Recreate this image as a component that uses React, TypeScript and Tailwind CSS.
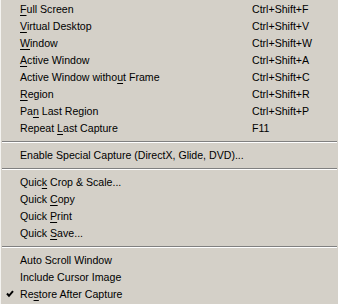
type Item = {
  pre: string;
  key?: string;
  post?: string;
  shortcut?: string;
  checked?: boolean;
};

const groups: Item[][] = [
  [
    { pre: '', key: 'F', post: 'ull Screen', shortcut: 'Ctrl+Shift+F' },
    { pre: '', key: 'V', post: 'irtual Desktop', shortcut: 'Ctrl+Shift+V' },
    { pre: '', key: 'W', post: 'indow', shortcut: 'Ctrl+Shift+W' },
    { pre: '', key: 'A', post: 'ctive Window', shortcut: 'Ctrl+Shift+A' },
    { pre: 'Active Window witho', key: 'u', post: 't Frame', shortcut: 'Ctrl+Shift+C' },
    { pre: '', key: 'R', post: 'egion', shortcut: 'Ctrl+Shift+R' },
    { pre: 'Pa', key: 'n', post: ' Last Region', shortcut: 'Ctrl+Shift+P' },
    { pre: 'Repeat ', key: 'L', post: 'ast Capture', shortcut: 'F11' },
  ],
  [{ pre: 'Enable Special Capture (DirectX, Glide, DVD)...' }],
  [
    { pre: 'Quic', key: 'k', post: ' Crop & Scale...' },
    { pre: 'Quick ', key: 'C', post: 'opy' },
    { pre: 'Quick ', key: 'P', post: 'rint' },
    { pre: 'Quick ', key: 'S', post: 'ave...' },
  ],
  [
    { pre: 'Auto Scroll Window' },
    { pre: 'Include Cursor Image' },
    { pre: 'Re', key: 's', post: 'tore After Capture', checked: true },
  ],
];

function Row({ item }: { item: Item }) {
  return (
    <div className="relative flex h-[17px] pt-px leading-[16px] pl-[19px]">
      {item.checked && (
        <svg className="absolute left-[5px] top-[5px]" width="8" height="8" viewBox="0 0 8 8">
          <polyline points="1,3.5 3,5.8 7,1.2" fill="none" stroke="#000" strokeWidth="2" />
        </svg>
      )}
      <span className="w-[232px] whitespace-nowrap">
        {item.pre}
        {item.key && <span className="underline underline-offset-[2px]">{item.key}</span>}
        {item.post}
      </span>
      {item.shortcut && <span className="whitespace-nowrap">{item.shortcut}</span>}
    </div>
  );
}

export default function App() {
  return (
    <div
      className="w-[338px] h-[304px] bg-[#d4d0c8] border-l border-[#f4f3f0] text-[10.6px] text-black overflow-hidden"
      style={{ fontFamily: '"Liberation Sans", Arial, sans-serif' }}
    >
      {groups.map((g, gi) => (
        <div key={gi}>
          {gi > 0 && (
            <div className="h-[10px] pt-[5px] pl-px pr-px">
              <div className="border-t border-b border-t-[#808080] border-b-white" />
            </div>
          )}
          {g.map((item, i) => (
            <Row key={i} item={item} />
          ))}
        </div>
      ))}
    </div>
  );
}
